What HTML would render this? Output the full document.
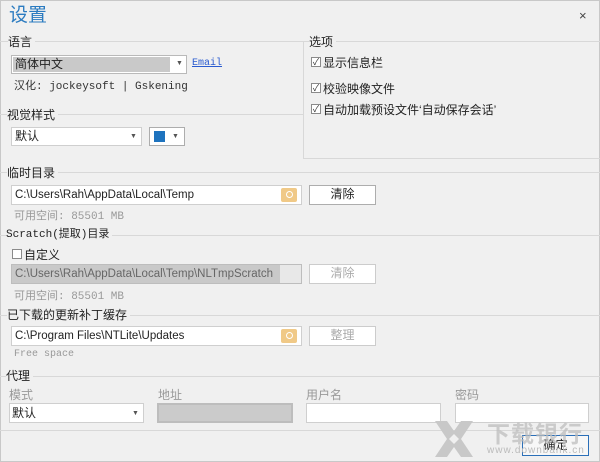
<!DOCTYPE html>
<html><head><meta charset="utf-8"><style>
*{margin:0;padding:0;box-sizing:border-box}
body{width:600px;height:462px;overflow:hidden;background:#f0f0f0;font-family:"Liberation Sans","Noto Sans CJK SC",sans-serif;font-size:12px;color:#222;position:relative}
.a{position:absolute;white-space:nowrap}
.hl{position:absolute;height:1px;background:#d8d8d8}
.vl{position:absolute;width:1px;background:#d8d8d8}
.lbl{position:absolute;background:#f0f0f0;padding-right:3px;font-size:12px;line-height:14px}
.box{position:absolute;background:#fff;border:1px solid #cfcfcf}
.btn{position:absolute;background:#fff;border:1px solid #adadad;text-align:center;line-height:17px;font-size:12px}
.mono{font-family:"Liberation Mono","Noto Sans CJK SC",monospace;font-size:11px}
.arr{position:absolute;font-size:7px;color:#555}
.cb{position:absolute;width:10px;height:10px;border:1px solid #8a8a8a;background:#fff;font-size:9px;line-height:8px;text-align:center;color:#333}
.ico{position:absolute;width:16px;height:14px;background:#f0c987;border-radius:2px}
.ico:after{content:"";position:absolute;left:5px;top:3px;width:5px;height:5px;border:1px solid #fff;border-radius:50%}
.path{font-size:11.5px;line-height:18px;padding-left:3px}
.g{color:#999}
</style></head><body>
<div class="a" style="left:0;top:0;width:600px;height:462px;border:1px solid #c8c8c8"></div>
<div class="a" style="left:9px;top:4px;font-size:19px;color:#2b7bc0;line-height:24px">设置</div>
<div class="a" style="left:579px;top:8px;font-size:13px;color:#444">×</div>

<div class="hl" style="left:0;top:41px;width:303px"></div>
<div class="lbl" style="left:8px;top:35px">语言</div>
<div class="box" style="left:11px;top:55px;width:176px;height:19px;border-color:#b9b9b9"></div>
<div class="a" style="left:13px;top:57px;width:157px;height:15px;background:#c9c9c9;font-size:12px;line-height:15px;padding-left:2px">简体中文</div>
<div class="arr" style="left:176px;top:60px">▼</div>
<div class="a mono" style="left:192px;top:58px;color:#2a5bd0;text-decoration:underline;font-size:10px">Email</div>
<div class="a mono" style="left:14px;top:77px;color:#333">汉化: jockeysoft | Gskening</div>

<div class="hl" style="left:0;top:114px;width:303px"></div>
<div class="lbl" style="left:7px;top:108px">视觉样式</div>
<div class="box" style="left:11px;top:127px;width:131px;height:19px;font-size:12px;line-height:17px;padding-left:3px">默认</div>
<div class="arr" style="left:130px;top:133px">▼</div>
<div class="box" style="left:149px;top:127px;width:36px;height:19px;border-color:#adadad"></div>
<div class="a" style="left:154px;top:131px;width:11px;height:11px;background:#1e73be"></div>
<div class="arr" style="left:172px;top:133px">▼</div>

<div class="vl" style="left:303px;top:42px;height:117px"></div>
<div class="hl" style="left:303px;top:41px;width:297px"></div>
<div class="hl" style="left:303px;top:158px;width:297px"></div>
<div class="lbl" style="left:309px;top:35px">选项</div>
<div class="cb" style="left:311px;top:57px">✓</div><div class="a" style="left:323px;top:54px">显示信息栏</div>
<div class="cb" style="left:311px;top:83px">✓</div><div class="a" style="left:323px;top:80px">校验映像文件</div>
<div class="cb" style="left:311px;top:104px">✓</div><div class="a" style="left:323px;top:101px">自动加载预设文件‘自动保存会话’</div>

<div class="hl" style="left:0;top:172px;width:600px"></div>
<div class="lbl" style="left:7px;top:166px">临时目录</div>
<div class="box path" style="left:11px;top:185px;width:291px;height:20px">C:\Users\Rah\AppData\Local\Temp</div>
<div class="ico" style="left:281px;top:188px"></div>
<div class="btn" style="left:309px;top:185px;width:67px;height:20px">清除</div>
<div class="a mono g" style="left:14px;top:207px">可用空间: 85501 MB</div>

<div class="hl" style="left:0;top:235px;width:600px"></div>
<div class="lbl mono" style="left:6px;top:228px;font-size:11px">Scratch(提取)目录</div>
<div class="cb" style="left:12px;top:249px"></div><div class="a" style="left:24px;top:246px">自定义</div>
<div class="box path" style="left:11px;top:264px;width:291px;height:20px;background:#c9c9c9;color:#666;border-color:#bdbdbd">C:\Users\Rah\AppData\Local\Temp\NLTmpScratch</div>
<div class="a" style="left:280px;top:265px;width:21px;height:18px;background:#e8e8e8"></div>
<div class="btn" style="left:309px;top:264px;width:67px;height:20px;color:#aaa;border-color:#ccc">清除</div>
<div class="a mono g" style="left:14px;top:287px">可用空间: 85501 MB</div>

<div class="hl" style="left:0;top:315px;width:600px"></div>
<div class="lbl" style="left:7px;top:308px">已下载的更新补丁缓存</div>
<div class="box path" style="left:11px;top:326px;width:291px;height:20px">C:\Program Files\NTLite\Updates</div>
<div class="ico" style="left:281px;top:329px"></div>
<div class="btn" style="left:309px;top:326px;width:67px;height:20px;color:#aaa;border-color:#ccc">整理</div>
<div class="a mono g" style="left:14px;top:349px;font-size:10px">Free space</div>

<div class="hl" style="left:0;top:376px;width:600px"></div>
<div class="lbl" style="left:6px;top:369px">代理</div>
<div class="a g" style="left:9px;top:386px">模式</div>
<div class="a g" style="left:158px;top:386px">地址</div>
<div class="a g" style="left:306px;top:386px">用户名</div>
<div class="a g" style="left:455px;top:386px">密码</div>
<div class="box" style="left:9px;top:403px;width:135px;height:20px;line-height:18px;padding-left:2px">默认</div>
<div class="arr" style="left:132px;top:410px">▼</div>
<div class="box" style="left:157px;top:403px;width:136px;height:20px;background:#cbcbcb;border:2px solid #bdbdbd"></div>
<div class="box" style="left:306px;top:403px;width:135px;height:20px"></div>
<div class="box" style="left:455px;top:403px;width:134px;height:20px"></div>
<div class="hl" style="left:0;top:430px;width:600px"></div>

<svg class="a" style="left:434px;top:420px" width="40" height="38" viewBox="0 0 40 38"><path d="M1 1h12l7 10 7-10h12L27 19l12 18H27l-7-10-7 10H1l12-18z" fill="#c8c8c8"/><path d="M20 14l5 5-5 5-5-5z" fill="#f0f0f0"/></svg>
<div class="btn" style="left:522px;top:435px;width:67px;height:21px;border-color:#2b6fb8;background:#f7f7f7;line-height:19px">确定</div>
<div class="a" style="left:487px;top:415px;font-size:23px;font-weight:bold;color:rgba(190,190,190,0.75);letter-spacing:1px">下载银行</div>
<div class="a" style="left:487px;top:445px;font-size:10px;color:#bbb;letter-spacing:1px">www.downbank.cn</div>
</body></html>
